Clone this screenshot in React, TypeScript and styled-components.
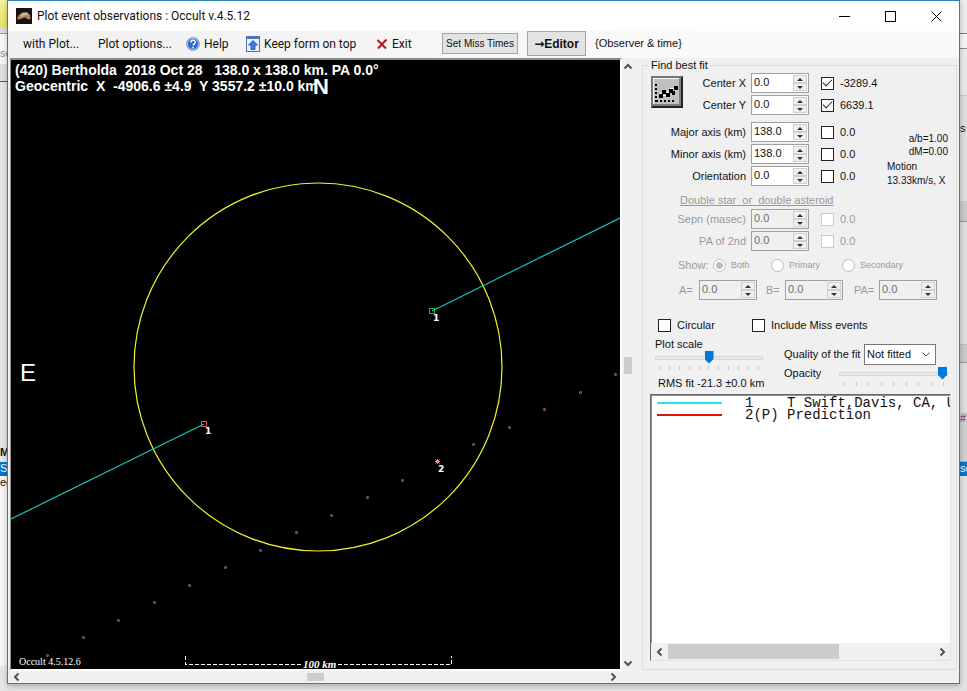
import React from "react";
import styled, { createGlobalStyle } from "styled-components";

const ui = `"Liberation Sans", Arial, sans-serif`;
const chrome = `Roboto, "Open Sans", sans-serif`;

const GlobalStyle = createGlobalStyle`
  *, *::before, *::after { box-sizing: border-box; }
  body { margin: 0; background: #e4e2e2; font: 11px/13px ${ui}; color: #111; }
  button, input, select { font: inherit; color: inherit; margin: 0; }
`;

/* ---------- desktop and window frame ---------- */

const Desktop = styled.div`
  display: grid;
  grid-template-columns: 7px minmax(0, 1fr) 7px;
  min-height: 100vh;
`;

const Strip = styled.div`
  display: flex;
  flex-direction: column;
  overflow: hidden;
  background: #e6e4e4;
`;

const Sliver = styled.div<{ $h: number; $bg: string; $line?: string; $bold?: boolean; $color?: string }>`
  flex: none;
  height: ${(p) => p.$h}px;
  overflow: hidden;
  white-space: nowrap;
  background: ${(p) => p.$bg};
  color: ${(p) => p.$color ?? "#111"};
  border-bottom: ${(p) => (p.$line ? `1px solid ${p.$line}` : "none")};
  font-weight: ${(p) => (p.$bold ? 700 : 400)};
`;

const Window = styled.main`
  display: flex;
  flex-direction: column;
  margin-bottom: 7px;
  min-width: 0;
  border: 1px solid #2f7fb8;
  background: #f0f0f0;
  box-shadow: 0 2px 5px rgba(0, 0, 0, 0.25);
  z-index: 1;
`;

const TitleBar = styled.header`
  display: flex;
  align-items: center;
  height: 30px;
  padding-left: 8px;
  background: #fff;
`;

const Title = styled.h1`
  flex: 1;
  margin: 0 0 0 5px;
  font: 400 12px/16px ${chrome};
`;

const CaptionButton = styled.button`
  display: grid;
  place-items: center;
  width: 46px;
  height: 30px;
  padding: 0;
  border: 0;
  background: transparent;
`;

/* ---------- toolbar ---------- */

const Toolbar = styled.nav`
  display: flex;
  align-items: center;
  height: 27px;
  padding: 0 0 2px 15px;
  background: linear-gradient(90deg, #f0f0f0, #fafafa 75%);
`;

const MenuButton = styled.button<{ $w: number }>`
  display: flex;
  align-items: center;
  gap: 4px;
  width: ${(p) => p.$w}px;
  padding: 0;
  border: 0;
  background: transparent;
  white-space: nowrap;
  font: 12px/16px ${chrome};
`;

const PushButton = styled.button<{ $w: number; $large?: boolean }>`
  width: ${(p) => p.$w}px;
  height: ${(p) => (p.$large ? 25 : 21)}px;
  margin-right: 9px;
  padding: 0;
  border: 1px solid #a5a5a5;
  background: #e3e3e3;
  white-space: nowrap;
  font: ${(p) => (p.$large ? `700 12px ${ui}` : `10px ${ui}`)};

  span { font-family: "DejaVu Sans", sans-serif; }
`;

/* ---------- body ---------- */

const Body = styled.div`
  display: grid;
  grid-template-columns: minmax(0, 1fr) 14px 321px;
  flex: 1;
  padding: 0 2px;
`;

const Plot = styled.section`
  position: relative;
  border-style: solid;
  border-width: 2px 2px 2px 1px;
  border-color: #8a8a8a #fff #fff #8a8a8a;
  background: #000;
`;

const PlotDrawing = styled.svg`
  display: block;
  width: 100%;
  height: 100%;
`;

const PlotHeading = styled.p`
  position: absolute;
  top: 2px;
  left: 4px;
  margin: 0;
  color: #fff;
  white-space: pre;
  font: 700 14px/16px ${ui};
`;

const VScroll = styled.div`
  display: flex;
  flex-direction: column;
  justify-content: space-between;
  align-items: center;
  padding: 4px 2px 3px 0;
`;

const HScroll = styled.div`
  display: flex;
  align-items: center;
  justify-content: space-between;
  width: 612px;
  max-width: 100%;
  height: 12px;
  padding: 0 2px 0 4px;
`;

const ArrowButton = styled.button`
  display: grid;
  place-items: center;
  width: 10px;
  height: 10px;
  padding: 0;
  border: 0;
  background: transparent;
`;

const Thumb = styled.div<{ $w: number; $h: number }>`
  width: ${(p) => p.$w}px;
  height: ${(p) => p.$h}px;
  background: #cdcdcd;
`;

/* ---------- fit panel ---------- */

const Group = styled.fieldset`
  display: flex;
  flex-direction: column;
  min-width: 0;
  margin: 0 0 1px 6px;
  padding: 0;
  border: 1px solid #dcdcdc;

  legend {
    height: 14px;
    margin-left: 6px;
    padding: 0 2px;
    line-height: 14px;
  }
`;

const Split = styled.div<{ $mt?: number }>`
  display: flex;
  margin-top: ${(p) => p.$mt ?? 0}px;
`;

const Stack = styled.div`
  display: flex;
  flex-direction: column;
`;

const FitButton = styled.button`
  width: 32px;
  height: 32px;
  margin: 4px 0 0 8px;
  padding: 0;
  border: 2px solid;
  border-color: #777 #222 #222 #777;
  background: #c0c0c0;
`;

const FitRow = styled.div<{ $label: number; $off?: boolean }>`
  display: grid;
  grid-template-columns: ${(p) => p.$label}px 58px 13px auto;
  align-items: center;
  height: 22px;
  color: ${(p) => (p.$off ? "#9a9a9a" : "#111")};

  > label { text-align: right; white-space: nowrap; }
  > label + div { margin-left: 5px; }
`;

const SpinBox = styled.div<{ $off?: boolean }>`
  display: flex;
  width: 58px;
  height: 20px;
  padding: 1px;
  border: 1px solid #a0a0a0;
  background: ${(p) => (p.$off ? "#f0f0f0" : "#fff")};

  input {
    flex: 1;
    min-width: 0;
    padding: 0 0 2px 1px;
    border: 0;
    outline: 0;
    background: transparent;
    color: ${(p) => (p.$off ? "#6d6d6d" : "#111")};
  }
`;

const SpinArrows = styled.div`
  display: grid;
  grid-template-rows: 1fr 1fr;
  width: 14px;

  button {
    display: grid;
    place-items: center;
    padding: 0;
    border: 1px solid #d0d0d0;
    background: #f0f0f0;
  }
`;

const CheckWrap = styled.label<{ $off?: boolean }>`
  display: flex;
  align-items: center;
  gap: 6px;
  white-space: nowrap;

  input {
    appearance: none;
    flex: none;
    width: 13px;
    height: 13px;
    border: 1px solid ${(p) => (p.$off ? "#cccccc" : "#222")};
    background: #fff;
  }
  input:checked::before {
    content: "";
    display: block;
    width: 9px;
    height: 5px;
    margin: 1px;
    border-left: 1px solid #222;
    border-bottom: 1px solid #222;
    transform: rotate(-45deg);
  }
`;

const FitCheck = styled(CheckWrap)`
  margin-left: 17px;
`;

const Stats = styled.div`
  display: flex;
  flex-direction: column;
  margin: 11px 0 0 auto;
  width: 69px;
  white-space: nowrap;
  font-size: 10px;
  line-height: 14px;

  span:nth-child(-n + 2) { padding-right: 8px; text-align: right; line-height: 13px; }
  span:nth-child(3) { margin-top: 2px; }
`;

const Subhead = styled.h2`
  margin: 6px 0 1px 37px;
  color: #9a9a9a;
  font: 400 11px/13px ${ui};
  text-decoration: underline;
  white-space: pre;
`;

const ShowRow = styled.div`
  display: grid;
  grid-template-columns: 35px 58px 71px auto;
  align-items: center;
  height: 27px;
  padding-left: 35px;
  color: #9a9a9a;
`;

const Radio = styled.label`
  display: flex;
  align-items: center;
  gap: 5px;
  font-size: 9px;

  input {
    appearance: none;
    width: 13px;
    height: 13px;
    border: 1px solid #bcbcbc;
    border-radius: 50%;
    background: #fff;
  }
  input:checked { background: radial-gradient(circle, #bcbcbc 3px, #fff 4px); }
`;

const AxesRow = styled.div`
  display: flex;
  align-items: center;
  height: 22px;
  padding-left: 36px;
  color: #9a9a9a;

  label { width: 20px; }
  div + label { width: 19px; margin-left: 9px; }
  div + label:last-of-type { width: 25px; margin-left: 11px; }
`;

const OptionsRow = styled.div`
  display: grid;
  grid-template-columns: 94px auto;
  align-items: center;
  height: 18px;
  margin: 15px 0 4px 15px;
`;

const ScaleColumn = styled.div`
  display: flex;
  flex-direction: column;
  width: 130px;
  padding-left: 12px;
`;

const FitColumn = styled.div`
  display: flex;
  flex-direction: column;
  flex: 1;
  padding: 5px 8px 0 11px;
`;

const SelectRow = styled.div`
  display: flex;
  align-items: center;
  justify-content: space-between;
  height: 22px;
  padding-right: 12px;
  white-space: nowrap;
`;

const SelectBox = styled.div`
  display: flex;
  align-items: center;
  width: 72px;
  height: 21px;
  border: 1px solid #777;
  background: #fff;

  select {
    appearance: none;
    flex: 1;
    min-width: 0;
    padding: 0 0 0 2px;
    border: 0;
    background: transparent;
  }
  svg { flex: none; margin-right: 4px; }
`;

const OpacityRow = styled.div`
  display: flex;
  justify-content: space-between;
  margin-top: 2px;
`;

const SliderWrap = styled.div<{ $w: number }>`
  width: ${(p) => p.$w}px;

  input {
    appearance: none;
    display: block;
    width: 100%;
    height: 13px;
    background: transparent;
  }
  input::-webkit-slider-runnable-track {
    height: 4px;
    border: 1px solid #d6d6d6;
    background: #e9e9e9;
  }
  input::-webkit-slider-thumb {
    appearance: none;
    width: 9px;
    height: 13px;
    margin-top: -6px;
    background: #0078d7;
    clip-path: polygon(0 0, 100% 0, 100% 65%, 50% 100%, 0 65%);
  }
`;

const Ticks = styled.div`
  display: flex;
  justify-content: space-between;
  padding: 2px 4px 0;

  i { width: 1px; height: 4px; background: #c4c4c4; }
`;

const Rms = styled.output`
  margin: 7px 0 0 3px;
  white-space: nowrap;
`;

const ListBox = styled.section`
  display: flex;
  flex-direction: column;
  flex: 1;
  margin: 4px 5px 8px 7px;
  border: 1px solid;
  border-color: #696969 #e3e3e3 #e3e3e3 #696969;
  box-shadow: inset 1px 1px #8f8f8f;
  background: #fff;
  overflow: hidden;
`;

const Observers = styled.ul`
  flex: 1;
  margin: 0;
  padding: 2px 0 0 6px;
  list-style: none;
`;

const Observer = styled.li<{ $color: string }>`
  display: flex;
  align-items: center;
  height: 12px;
  white-space: pre;
  font: 14px/12px "Liberation Mono", monospace;

  &::before {
    content: "";
    flex: none;
    width: 65px;
    height: 2px;
    margin-right: 23px;
    background: ${(p) => p.$color};
  }
`;

const ListScroll = styled.div`
  display: grid;
  grid-template-columns: 17px minmax(0, 1fr) 17px;
  align-items: center;
  justify-items: center;
  height: 17px;
  background: #f0f0f0;

  > div { justify-self: start; }
`;

type Dir = "up" | "down" | "left" | "right";
const chevrons: Record<Dir, string> = {
  up: "M1.5 6.5 5 3l3.5 3.5",
  down: "M1.5 3.5 5 7l3.5-3.5",
  left: "M6.5 1.5 3 5l3.5 3.5",
  right: "M3.5 1.5 7 5 3.5 8.5",
};

const Arrow = ({ dir, thin }: { dir: Dir; thin?: boolean }) => (
  <svg width="10" height="10" viewBox="0 0 10 10" fill="none" stroke="#505050" strokeWidth={thin ? 1 : 2}>
    <path d={chevrons[dir]} />
  </svg>
);

function Spin({ id, value = "0.0", off }: { id: string; value?: string; off?: boolean }) {
  return (
    <SpinBox $off={off}>
      <input id={id} defaultValue={value} disabled={off} />
      <SpinArrows>
        <button aria-label="Increase" disabled={off}>
          <svg width="6" height="3"><path d="M0 3 3 0l3 3z" fill="#333" /></svg>
        </button>
        <button aria-label="Decrease" disabled={off}>
          <svg width="6" height="3"><path d="M0 0h6L3 3z" fill="#333" /></svg>
        </button>
      </SpinArrows>
    </SpinBox>
  );
}

interface FitProps { id: string; label: string; value?: string; result?: string; checked?: boolean; off?: boolean; width?: number }

function Fit({ id, label, value, result = "0.0", checked, off, width = 103 }: FitProps) {
  return (
    <FitRow $label={width} $off={off}>
      <label htmlFor={id}>{label}</label>
      <Spin id={id} value={value} off={off} />
      <FitCheck $off={off}>
        <input type="checkbox" defaultChecked={checked} disabled={off} />
        {result}
      </FitCheck>
    </FitRow>
  );
}

function Slider({ id, width, value, ticks }: { id: string; width: number; value: number; ticks: number }) {
  return (
    <SliderWrap $w={width}>
      <input id={id} type="range" min={0} max={100} defaultValue={value} />
      <Ticks>{Array.from({ length: ticks }, (_, i) => <i key={i} />)}</Ticks>
    </SliderWrap>
  );
}

const predictionDots = Array.from({ length: 17 }, (_, i) => ({
  x: Math.round(36 + i * 35.5),
  y: Math.round(595 - i * 17.55),
}));

function OccultationPlot() {
  return (
    <PlotDrawing viewBox="0 0 609 609">
      <circle cx="307" cy="307" r="184" fill="none" stroke="#f2f22c" strokeWidth="1.2" />
      <g stroke="#12c9bd" strokeWidth="1.2">
        <path d="M421 251 609 158" />
        <path d="M193 364 0 459" />
      </g>
      <rect x="418.5" y="248.5" width="5" height="5" fill="none" stroke="#14b83c" />
      <rect x="190.5" y="361.5" width="5" height="5" fill="none" stroke="#e0504c" />
      {predictionDots.map((d, i) =>
        i === 11 ? (
          <path key={i} d="M424.500 399.500l4 4M428.500 399.500l-4 4M426.500 399v5M424 401.500h5" stroke="#d98aa4" />
        ) : (
          <circle key={i} cx={d.x + 0.5} cy={d.y + 0.5} r="1" fill="#5a1420" stroke="#c87088" />
        ),
      )}
      <g fill="#fff" fontFamily="DejaVu Sans, sans-serif" fontSize="9" fontWeight="700">
        <text x="422" y="261">1</text>
        <text x="194" y="374">1</text>
        <text x="427" y="412">2</text>
      </g>
      <g fill="#fff" fontFamily="Liberation Sans, sans-serif">
        <text x="9" y="321" fontSize="24">E</text>
        <text x="302" y="34" fontSize="22" fontWeight="700">N</text>
      </g>
      <g stroke="#fff" strokeDasharray="4 2" fill="none" shapeRendering="crispEdges">
        <path d="M174.500 596v8.500H290M327 604.500h113.500V596" />
      </g>
      <g fill="#fff" fontFamily="Liberation Serif, serif">
        <text x="8" y="605" fontSize="10">Occult 4.5.12.6</text>
        <text x="292" y="608" fontSize="11" fontWeight="700" fontStyle="italic">100 km</text>
      </g>
    </PlotDrawing>
  );
}

const AppIcon = () => (
  <svg width="16" height="16" viewBox="0 0 16 16">
    <rect width="16" height="16" fill="#17120f" />
    <path d="M1 11 2.500 7.500 6 4.500l5-.5 3 3 .5 4-2.500.5-2.500-2-2.500.500-2 1-2 .5z" fill="#a98663" />
    <path d="M4 7.500 7 5l4 0 1.500 2-4 .5-3 1.500z" fill="#cdb08c" />
  </svg>
);

const HelpIcon = () => (
  <svg width="14" height="14" viewBox="0 0 14 14">
    <circle cx="7" cy="7" r="6.5" fill="#2e66cf" stroke="#98a9c8" />
    <circle cx="7" cy="7" r="5.5" fill="none" stroke="#dfe9fb" strokeWidth=".7" />
    <path d="M4.900 5.400c0-3 4.400-2.800 4.400-.2 0 1.700-2.200 1.600-2.200 3.300M7.100 9.700v1.500" fill="none" stroke="#fff" strokeWidth="1.5" />
  </svg>
);

const UpIcon = () => (
  <svg width="14" height="16" viewBox="0 0 14 16">
    <rect x=".5" y=".5" width="13" height="15" fill="#e9f1ff" stroke="#4d74b8" />
    <path d="M1 2h12" stroke="#4d74b8" strokeWidth="2" />
    <path d="M7 4.500 11.500 9H9v4.500H5V9H2.500z" fill="#3f7be0" stroke="#1c4aa4" strokeWidth=".8" />
  </svg>
);

const ExitIcon = () => (
  <svg width="12" height="12" viewBox="0 0 12 12" fill="none" stroke="#c01414" strokeWidth="2">
    <path d="M1.500 2 10 10.500M10.500 1.500 2 10.500" />
  </svg>
);

const FitIcon = () => (
  <svg width="28" height="28" viewBox="0 0 28 28" shapeRendering="crispEdges">
    <path d="M0 28V0h28" fill="none" stroke="#f4f4f4" strokeWidth="2" />
    <path d="M28 0v28H0" fill="none" stroke="#808080" strokeWidth="4" />
    <path d="M3 6v18" stroke="#000" strokeWidth="2" strokeDasharray="2 2" />
    <path d="M3 23h20" stroke="#000" strokeWidth="2" strokeDasharray="2 2" />
    <path d="M6 18h4M9 14h4M13 17h4M16 13h4M19 15h3M21 10h4" stroke="#000" strokeWidth="4" />
    <path d="M7 15h2M13 14h3M17 10h4M10 17h3" stroke="#fff" strokeWidth="1" />
  </svg>
);

export default function App() {
  return (
    <>
      <GlobalStyle />
      <Desktop>
        <Strip aria-hidden="true">
          <Sliver $h={28} $bg="linear-gradient(#f3f0a0, #e8e35c)" />
          <Sliver $h={6} $bg="#dcdcdc" $line="#999" />
          <Sliver $h={30} $bg="#f7f7f7" $color="#888"><br />se</Sliver>
          <Sliver $h={18} $bg="#dedede" $line="#555" />
          <Sliver $h={364} $bg="#e6e4e4" />
          <Sliver $h={16} $bg="#e6e4e4" $bold>M</Sliver>
          <Sliver $h={14} $bg="#0b72c4" $color="#fff">St</Sliver>
          <Sliver $h={190} $bg="#f5f5f5">ec</Sliver>
        </Strip>

        <Window>
          <TitleBar>
            <AppIcon />
            <Title>Plot event observations : Occult v.4.5.12</Title>
            <CaptionButton aria-label="Minimize">
              <svg width="11" height="11"><path d="M0 5.500h11" stroke="#000" /></svg>
            </CaptionButton>
            <CaptionButton aria-label="Maximize">
              <svg width="11" height="11"><rect x=".5" y=".5" width="10" height="10" fill="none" stroke="#000" /></svg>
            </CaptionButton>
            <CaptionButton aria-label="Close">
              <svg width="11" height="11"><path d="M.5.5l10 10M10.500.5l-10 10" stroke="#000" /></svg>
            </CaptionButton>
          </TitleBar>

          <Toolbar>
            <MenuButton $w={75}>with Plot...</MenuButton>
            <MenuButton $w={88}>Plot options...</MenuButton>
            <MenuButton $w={60}><HelpIcon />Help</MenuButton>
            <MenuButton $w={130}><UpIcon />Keep form on top</MenuButton>
            <MenuButton $w={66}><ExitIcon />Exit</MenuButton>
            <PushButton $w={76}>Set Miss Times</PushButton>
            <PushButton $w={59} $large><span>→</span>Editor</PushButton>
            <span>{"{Observer & time}"}</span>
          </Toolbar>

          <Body>
            <Plot>
              <OccultationPlot />
              <PlotHeading>
                {"(420) Bertholda  2018 Oct 28   138.0 x 138.0 km. PA 0.0°\nGeocentric  X  -4906.6 ±4.9  Y 3557.2 ±10.0 km"}
              </PlotHeading>
            </Plot>
            <VScroll>
              <ArrowButton aria-label="Scroll up"><Arrow dir="up" /></ArrowButton>
              <Thumb $w={8} $h={17} />
              <ArrowButton aria-label="Scroll down"><Arrow dir="down" /></ArrowButton>
            </VScroll>

            <Group>
              <legend>Find best fit</legend>
              <Split>
                <FitButton aria-label="Find best fit"><FitIcon /></FitButton>
                <Stack>
                  <Fit id="cx" label="Center X" result="-3289.4" checked width={63} />
                  <Fit id="cy" label="Center Y" result="6639.1" checked width={63} />
                </Stack>
              </Split>
              <Split $mt={5}>
                <Stack>
                  <Fit id="major" label="Major axis (km)" value="138.0" />
                  <Fit id="minor" label="Minor axis (km)" value="138.0" />
                  <Fit id="orient" label="Orientation" />
                </Stack>
                <Stats>
                  <span>a/b=1.00</span>
                  <span>dM=0.00</span>
                  <span>Motion</span>
                  <span>13.33km/s, X</span>
                </Stats>
              </Split>
              <Subhead>{"Double star  or  double asteroid"}</Subhead>
              <Fit id="sepn" label="Sepn (masec)" off />
              <Fit id="pa2" label="PA of 2nd" off />
              <ShowRow>
                <span>Show:</span>
                <Radio><input type="radio" name="show" defaultChecked disabled />Both</Radio>
                <Radio><input type="radio" name="show" disabled />Primary</Radio>
                <Radio><input type="radio" name="show" disabled />Secondary</Radio>
              </ShowRow>
              <AxesRow>
                <label htmlFor="axa">A=</label><Spin id="axa" off />
                <label htmlFor="axb">B=</label><Spin id="axb" off />
                <label htmlFor="axpa">PA=</label><Spin id="axpa" off />
              </AxesRow>
              <OptionsRow>
                <CheckWrap><input type="checkbox" />Circular</CheckWrap>
                <CheckWrap><input type="checkbox" />Include Miss events</CheckWrap>
              </OptionsRow>
              <Split>
                <ScaleColumn>
                  <label htmlFor="scale">Plot scale</label>
                  <Slider id="scale" width={108} value={50} ticks={11} />
                  <Rms>RMS fit -21.3 ±0.0 km</Rms>
                </ScaleColumn>
                <FitColumn>
                  <SelectRow>
                    <label htmlFor="quality">Quality of the fit</label>
                    <SelectBox>
                      <select id="quality" defaultValue="Not fitted"><option>Not fitted</option></select>
                      <Arrow dir="down" thin />
                    </SelectBox>
                  </SelectRow>
                  <OpacityRow>
                    <label htmlFor="opacity">Opacity</label>
                    <Slider id="opacity" width={109} value={100} ticks={9} />
                  </OpacityRow>
                </FitColumn>
              </Split>
              <ListBox>
                <Observers>
                  <Observer $color="#1fe6ee">1    T Swift,Davis, CA, U</Observer>
                  <Observer $color="#dd1111">2(P) Prediction</Observer>
                </Observers>
                <ListScroll>
                  <ArrowButton aria-label="Scroll left"><Arrow dir="left" /></ArrowButton>
                  <Thumb $w={171} $h={15} />
                  <ArrowButton aria-label="Scroll right"><Arrow dir="right" /></ArrowButton>
                </ListScroll>
              </ListBox>
            </Group>
          </Body>

          <HScroll>
            <ArrowButton aria-label="Scroll left"><Arrow dir="left" /></ArrowButton>
            <Thumb $w={17} $h={8} />
            <ArrowButton aria-label="Scroll right"><Arrow dir="right" /></ArrowButton>
          </HScroll>
        </Window>

        <Strip aria-hidden="true">
          <Sliver $h={34} $bg="#ececec" $line="#777" />
          <Sliver $h={15} $bg="#f4f4f4" $line="#888" />
          <Sliver $h={47} $bg="#e8e8e8" $line="#ccc" />
          <Sliver $h={105} $bg="#dcdcdc"><br /><br />s</Sliver>
          <Sliver $h={21} $bg="#c8c8c8" $line="#999" />
          <Sliver $h={123} $bg="#dcdcdc" $line="#bbb" />
          <Sliver $h={18} $bg="#c8c8c8" $line="#999" />
          <Sliver $h={49} $bg="#dcdcdc" />
          <Sliver $h={50} $bg="#cfcfcf" $line="#aaa" $color="#7a1060">#1</Sliver>
          <Sliver $h={14} $bg="#0b72c4" $color="#fff">se</Sliver>
          <Sliver $h={215} $bg="#e2e2e2" />
        </Strip>
      </Desktop>
    </>
  );
}
